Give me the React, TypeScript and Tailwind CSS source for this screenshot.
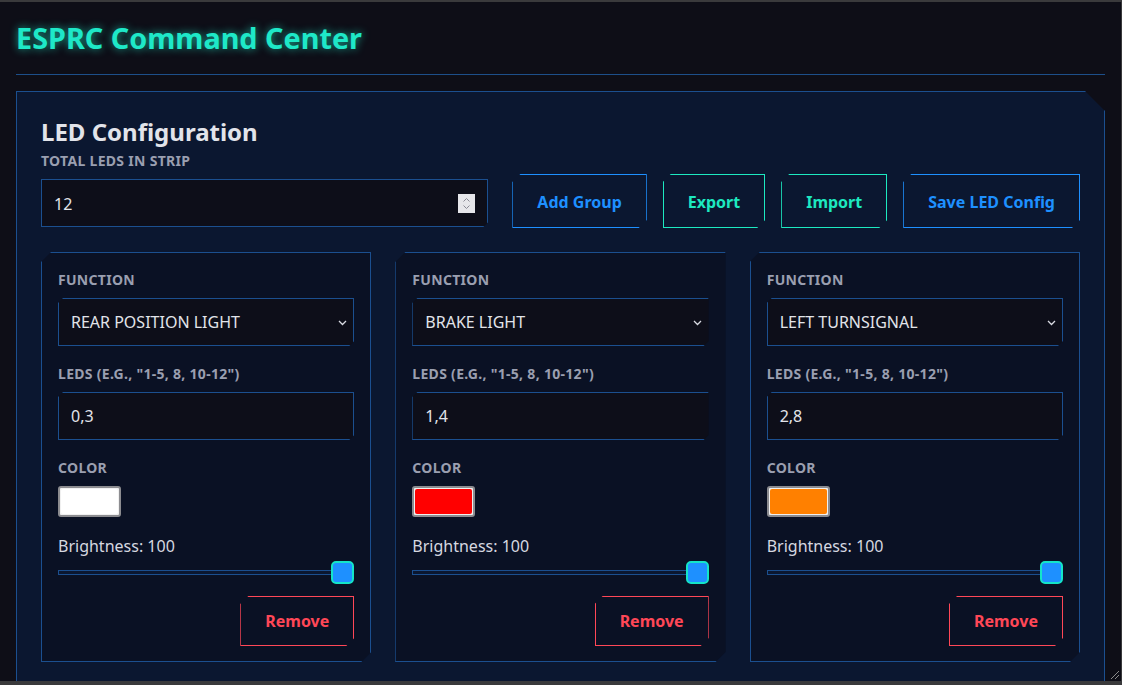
import React from 'react';

const groups = [
  { fn: 'REAR POSITION LIGHT', leds: '0,3', color: 'bg-white', clipRight: false },
  { fn: 'BRAKE LIGHT', leds: '1,4', color: 'bg-[#ff0000]', clipRight: true },
  { fn: 'LEFT TURNSIGNAL', leds: '2,8', color: 'bg-[#ff8000]', clipRight: false },
];

const cut8 = '[clip-path:polygon(8px_0,100%_0,100%_calc(100%-8px),calc(100%-8px)_100%,0_100%,0_8px)]';
const label = 'text-[14px] font-bold uppercase tracking-[0.3px] leading-5 text-[#9a9fb0]';

function Chevron() {
  return (
    <svg width="9" height="6" viewBox="0 0 9 6" className="absolute right-[6px] top-[21px]">
      <path d="M1 1l3.5 3.5L8 1" fill="none" stroke="#d8dae2" strokeWidth="1.3" />
    </svg>
  );
}

function GroupCard({ g }: { g: (typeof groups)[number] }) {
  const rb = g.clipRight ? 'border-r-transparent' : '';
  return (
    <div
      className={`flex flex-col border border-[#1b4f8f] bg-[#0a1124] px-4 pt-4 pb-[15px] [clip-path:polygon(10px_0,100%_0,100%_calc(100%-10px),calc(100%-10px)_100%,0_100%,0_10px)] ${rb}`}>
      <div className={`${label} pt-px mb-2`}>Function</div>
      <div
        className={`relative h-12 mb-[17px] flex items-center border border-[#1b4f8f] bg-[#0d0e19] pl-3 text-base text-[#e2e4ea] [clip-path:polygon(5px_0,100%_0,100%_calc(100%-5px),calc(100%-5px)_100%,0_100%,0_5px)] ${rb}`}>
        {g.fn}
        <Chevron />
      </div>
      <div className={`${label} pt-px mb-2`}>LEDs (e.g., "1-5, 8, 10-12")</div>
      <div
        className={`h-12 mb-[17px] flex items-center border border-[#1b4f8f] bg-[#0d0e19] pl-3 text-base text-[#e2e4ea] [clip-path:polygon(5px_0,100%_0,100%_calc(100%-5px),calc(100%-5px)_100%,0_100%,0_5px)] ${rb}`}>
        {g.leds}
      </div>
      <div className={`${label} pt-px mb-2`}>Color</div>
      <div className="mb-[17px] h-[31px] w-[63px] rounded-[3px] border-2 border-[#8c8c90] bg-[#f0f0f0] p-px">
        <div className={`h-full w-full rounded-[2px] ${g.color}`} />
      </div>
      <div className="text-base leading-6 text-[#d6d8e0]">Brightness: 100</div>
      <div className="relative mt-[3px] flex h-[23px] items-center">
        <div className="h-[5px] w-full border border-[#1b4f8f] bg-[#0b1730]" />
        <div className="absolute right-0 top-0 h-[23px] w-[23px] rounded-[5px] border-2 border-[#14e5c8] bg-[#1e90ff]" />
      </div>
      <div className="mt-3 flex justify-end">
        <button className={`h-[50px] border border-[#ff4757] px-6 text-base font-bold text-[#ff4757] ${cut8}`}>Remove</button>
      </div>
    </div>
  );
}

export default function App() {
  return (
    <div
      className="relative h-[685px] w-[1122px] overflow-hidden border-t-2 border-r border-b-4 border-[#3a3a3c] bg-[#0e0e17] px-4 pt-[15px]"
      style={{ fontFamily: '"Noto Sans", "Open Sans", sans-serif' }}>
      <h1 className="border-b border-[#1d4f8a] pb-[15px] text-[28.8px] font-bold leading-[42px] text-[#1ee8c8] [text-shadow:0_0_8px_rgba(30,232,200,0.7)]">
        ESPRC Command Center
      </h1>

      <div className="mt-4 border border-[#1b4f8f] bg-[#0b1730] px-6 pt-6 pb-6 [clip-path:polygon(0_0,calc(100%-20px)_0,100%_20px,100%_100%,0_100%)]">
        <h2 className="text-2xl font-bold leading-8 text-[#e2e4ea]">LED Configuration</h2>

        <div className="flex items-end gap-6">
          <div className="flex flex-1 flex-col">
            <div className={`mt-[3px] ${label}`}>Total LEDs in strip</div>
            <div className="relative mt-2 flex h-12 items-center border border-[#1b4f8f] bg-[#0d0e19] pl-3 pt-px text-base text-[#e2e4ea] [clip-path:polygon(0_0,100%_0,100%_calc(100%-5px),calc(100%-5px)_100%,0_100%)]">
              12
              <div className="absolute right-[12px] top-[14px] flex h-[19px] w-[17px] flex-col items-center justify-center gap-[3px] bg-[#e6e6ea]">
                <svg width="7" height="4" viewBox="0 0 7 4"><path d="M0.5 3.5L3.5 0.5L6.5 3.5" fill="none" stroke="#8a8a95" strokeWidth="1" /></svg>
                <svg width="7" height="4" viewBox="0 0 7 4"><path d="M0.5 0.5L3.5 3.5L6.5 0.5" fill="none" stroke="#8a8a95" strokeWidth="1" /></svg>
              </div>
            </div>
          </div>
          <div className="mb-[-1px] flex gap-4">
            <button className={`h-[54px] border border-[#1e90ff] px-6 pt-[2px] text-base font-bold text-[#1e90ff] ${cut8}`}>Add Group</button>
            <button className={`h-[54px] border border-[#1de9c0] px-6 pt-[2px] text-base font-bold text-[#1de9c0] ${cut8}`}>Export</button>
            <button className={`h-[54px] border border-[#1de9c0] px-6 pt-[2px] text-base font-bold text-[#1de9c0] ${cut8}`}>Import</button>
            <button className={`h-[54px] border border-[#1e90ff] px-6 pt-[2px] text-base font-bold text-[#1e90ff] ${cut8}`}>Save LED Config</button>
          </div>
        </div>

        <div className="mt-[25px] grid grid-cols-3 gap-6">
          {groups.map((g) => (
            <GroupCard key={g.fn} g={g} />
          ))}
        </div>
      </div>

      <svg width="12" height="12" viewBox="0 0 12 12" className="absolute bottom-[1px] right-[1px]">
        <path d="M11 3L3 11M11 7L7 11" stroke="#8a8a8a" strokeWidth="1" />
      </svg>
    </div>
  );
}
